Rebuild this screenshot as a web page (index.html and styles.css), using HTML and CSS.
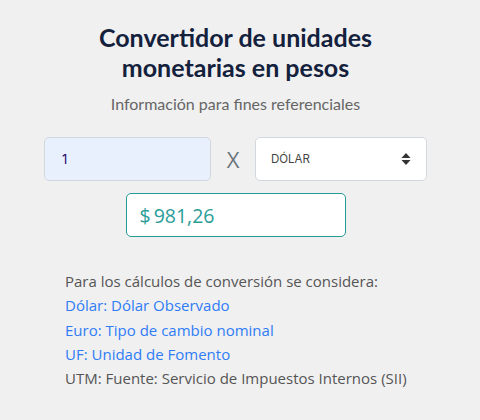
FILE: index.html
```html
<!DOCTYPE html>
<html lang="es">
<head>
  <meta charset="UTF-8" />
  <title>Convertidor de unidades monetarias</title>
  <link rel="stylesheet" href="styles.css">
</head>
<body>
  <div class="converter">
    <h1>Convertidor de unidades<br>monetarias en pesos</h1>
    <p class="subtitle">Información para fines referenciales</p>

    <!-- inputs -->
    <div class="row">
      <input class="amount" type="text" value="1">
      <span class="times">X</span>
      <div class="select">
        <span>DÓLAR</span>
        <svg width="10" height="14" viewBox="0 0 10 14">
          <path d="M5 1 L9.5 6 H0.5 Z" fill="#333"/>
          <path d="M5 13 L9.5 8 H0.5 Z" fill="#333"/>
        </svg>
      </div>
    </div>

    <!-- result -->
    <div class="result"><span class="currency">$</span>981,26</div>

    <div class="info">
      <p>Para los cálculos de conversión se considera:</p>
      <p class="link">Dólar: Dólar Observado</p>
      <p class="link">Euro: Tipo de cambio nominal</p>
      <p class="link">UF: Unidad de Fomento</p>
      <p>UTM: Fuente: Servicio de Impuestos Internos (SII)</p>
    </div>
  </div>
</body>
</html>
```

FILE: styles.css
```css
body {
  margin: 0;
  background: #f0f0f0;
  font-family: 'Open Sans', sans-serif;
  color: #555;
}

.converter {
  width: 383px;
  margin-left: 44px;
  padding-top: 22px;
  display: flex;
  flex-direction: column;
  align-items: center;
}

h1 {
  margin: 0;
  font-family: 'Lato', sans-serif;
  font-weight: bold;
  font-size: 25px;
  line-height: 30px;
  color: #14213d;
  text-align: center;
}

.subtitle {
  margin: 11px 0 0;
  font-family: 'Lato', sans-serif;
  font-size: 16px;
  line-height: 22px;
  color: #666;
}

.row {
  margin-top: 22px;
  width: 100%;
  display: flex;
  align-items: center;
}

.amount {
  box-sizing: border-box;
  width: 167px;
  height: 44px;
  padding: 0 17px;
  border: 1px solid #d3d8de;
  border-radius: 5px;
  background: #e8f0fe;
  font-family: 'Inter', sans-serif;
  font-size: 13px;
  color: #2a0a6b;
  outline: none;
}

.times {
  width: 44px;
  text-align: center;
  font-family: 'Open Sans', sans-serif;
  font-size: 22px;
  color: #6c757d;
}

.select {
  box-sizing: border-box;
  flex: 1;
  height: 44px;
  padding: 0 15px 0 15px;
  display: flex;
  align-items: center;
  justify-content: space-between;
  border: 1px solid #d3d8de;
  border-radius: 5px;
  background: #fff;
  font-family: 'Inter', sans-serif;
  font-size: 11.5px;
  color: #444;
}

.result {
  box-sizing: border-box;
  margin-top: 12px;
  width: 220px;
  height: 44px;
  padding: 0 13px;
  display: flex;
  align-items: center;
  border: 1px solid #259b95;
  border-radius: 5px;
  background: #fff;
  font-size: 19.5px;
  color: #2a9d99;
}

.currency {
  margin-right: 3px;
}

.info {
  margin-top: 32px;
  align-self: stretch;
  padding-left: 21px;
  font-size: 15px;
  line-height: 24.3px;
  color: #555;
}

.info p {
  margin: 0;
}

.info .link {
  color: #2f7cf6;
}
```
